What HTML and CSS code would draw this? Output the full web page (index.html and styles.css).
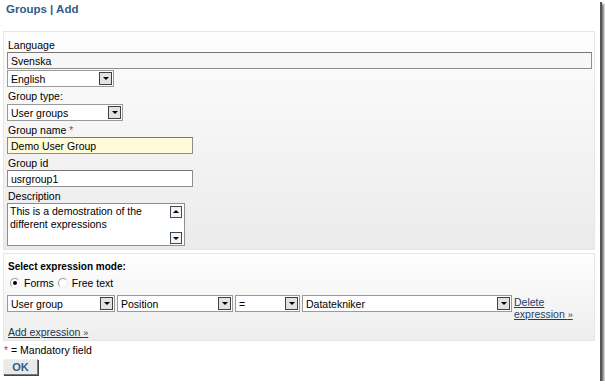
FILE: index.html
```html
<!DOCTYPE html>
<html lang="en">
  <head>
    <meta charset="UTF-8" />
    <title>Groups | Add</title>
    <link rel="stylesheet" href="styles.css">
  </head>
  <body>
    <div class="window">
      <h1>Groups | Add</h1>

      <div class="panel main-panel">
        <label class="field-label">Language</label>
        <input type="text" class="text-input wide" value="Svenska">
        <div class="select lang-select"><span class="select-text">English</span><span class="arrow"></span></div>

        <label class="field-label">Group type:</label>
        <div class="select type-select"><span class="select-text">User groups</span><span class="arrow"></span></div>

        <label class="field-label">Group name <span class="req">*</span></label>
        <input type="text" class="text-input medium mandatory" value="Demo User Group">

        <label class="field-label">Group id</label>
        <input type="text" class="text-input medium" value="usrgroup1">

        <label class="field-label">Description</label>
        <div class="textarea">
          <div class="textarea-text">This is a demostration of the different expressions</div>
          <div class="scrollbar">
            <span class="scroll-btn"><span class="tri up"></span></span>
            <span class="scroll-btn"><span class="tri"></span></span>
          </div>
        </div>
      </div>

      <div class="panel expr-panel">
        <div class="expr-title">Select expression mode:</div>
        <div class="mode-row">
          <label><span class="radio checked"></span>Forms</label>
          <label><span class="radio"></span>Free text</label>
        </div>
        <div class="expr-row">
          <div class="select s-field"><span class="select-text">User group</span><span class="arrow"></span></div>
          <div class="select s-prop"><span class="select-text">Position</span><span class="arrow"></span></div>
          <div class="select s-op"><span class="select-text">=</span><span class="arrow"></span></div>
          <div class="select s-value"><span class="select-text">Datatekniker</span><span class="arrow"></span></div>
          <a href="#" class="delete-link">Delete<br>expression <span class="raquo">»</span></a>
        </div>
        <a href="#" class="add-link">Add expression <span class="raquo">»</span></a>
      </div>

      <div class="mandatory-note"><span class="req">*</span> = Mandatory field</div>
      <button class="ok-button">OK</button>
    </div>
  </body>
</html>
```

FILE: styles.css
```css
body {
  margin: 0;
  background: #fff;
  font-family: "Liberation Sans", Arial, sans-serif;
  font-size: 10.5px;
  color: #000;
}
.window {
  width: 600px;
  height: 381px;
  background: #fff;
  box-shadow: 2px 2px 0 #555, 4px 4px 2px #777;
  overflow: hidden;
}
h1 {
  margin: 0;
  padding: 3px 6px 0;
  height: 28px;
  font-size: 11.5px;
  font-weight: bold;
  color: #2f5b8b;
}
.panel {
  box-sizing: border-box;
  margin: 0 5px 0 3px;
  border: 1px solid #e6e6e6;
  padding: 4px 3px 4px;
}
.main-panel {
  height: 219px;
  background: linear-gradient(#fdfdfd, #ebebeb);
}
.expr-panel {
  margin-top: 3px;
  height: 88px;
  padding-top: 6px;
  background: linear-gradient(#fefefe, #eeeeee);
}
.field-label {
  display: block;
  height: 14px;
  line-height: 14px;
  margin-top: 2px;
  padding-left: 1px;
}
.req {
  color: #e0302a;
}
.text-input {
  display: block;
  box-sizing: border-box;
  height: 17px;
  margin: 0;
  padding: 0 3px;
  border: 1px solid #8e8e8e;
  border-top-color: #777;
  font-family: inherit;
  font-size: 10.5px;
  background: #fff;
}
.wide {
  width: 585px;
  background: #f7f7f7;
}
.medium {
  width: 186px;
}
.mandatory {
  background: #fffbd9;
}
.select {
  display: flex;
  align-items: center;
  box-sizing: border-box;
  height: 17px;
  border: 1px solid #9a9a9a;
  background: #fff;
  padding-left: 3px;
}
.select-text {
  flex: 1;
  white-space: nowrap;
}
.arrow {
  position: relative;
  box-sizing: border-box;
  width: 13px;
  height: 13px;
  margin-right: 1px;
  border: 1px solid #404040;
  background: #e2e2e2;
}
.arrow::after {
  content: "";
  position: absolute;
  left: 3px;
  top: 4px;
  border-left: 3px solid transparent;
  border-right: 3px solid transparent;
  border-top: 3px solid #000;
}
.lang-select {
  width: 107px;
  margin-top: 1px;
}
.type-select {
  width: 116px;
  margin-top: 1px;
}
.textarea {
  display: flex;
  box-sizing: border-box;
  width: 178px;
  height: 43px;
  margin-top: 0;
  border: 1px solid #8e8e8e;
  background: #fff;
}
.textarea-text {
  flex: 1;
  padding: 1px 2px;
  line-height: 13px;
}
.scrollbar {
  display: flex;
  flex-direction: column;
  justify-content: space-between;
  padding: 2px 2px 1px;
}
.scroll-btn {
  position: relative;
  box-sizing: border-box;
  width: 12px;
  height: 12px;
  border: 1px solid #3a4a5a;
  background: #f4f4f4;
}
.tri {
  position: absolute;
  left: 2px;
  top: 4px;
  border-left: 3px solid transparent;
  border-right: 3px solid transparent;
  border-top: 3px solid #000;
}
.tri.up {
  top: 3px;
  border-top: none;
  border-bottom: 3px solid #000;
}
.expr-title {
  font-weight: bold;
  font-size: 10px;
  line-height: 14px;
  padding-left: 1px;
}
.mode-row {
  display: flex;
  gap: 4px;
  height: 16px;
  align-items: center;
  padding-left: 3px;
  margin-top: 1px;
}
.mode-row label {
  display: flex;
  align-items: center;
}
.radio {
  position: relative;
  width: 8px;
  height: 8px;
  margin-right: 4px;
  border-radius: 50%;
  border: 1px solid #999;
  border-right-color: #eee;
  border-bottom-color: #eee;
  background: #fff;
}
.radio.checked::after {
  content: "";
  position: absolute;
  left: 2px;
  top: 2px;
  width: 4px;
  height: 4px;
  border-radius: 50%;
  background: #000;
}
.expr-row {
  display: flex;
  align-items: flex-start;
  gap: 2px;
  margin-top: 4px;
}
.s-field { width: 108px; }
.s-prop { width: 116px; }
.s-op { width: 65px; }
.s-value { width: 210px; }
.delete-link,
.add-link {
  color: #1f3d63;
  line-height: 12px;
}
.delete-link {
  margin-top: 1px;
}
.add-link {
  display: inline-block;
  margin-top: 5px;
  padding-left: 1px;
  color: #23354d;
}
.raquo {
  font-size: 9px;
}
.mandatory-note {
  margin-top: 2px;
  padding-left: 4px;
  line-height: 14px;
}
.ok-button {
  display: block;
  margin: 2px 0 0 3px;
  width: 35px;
  height: 16px;
  padding: 0;
  border: 1px solid #777;
  border-top-color: #f0f0f0;
  border-left-color: #f0f0f0;
  box-shadow: 1px 1px 0 #444;
  background: #eaeaea;
  font-family: inherit;
  font-size: 11px;
  font-weight: bold;
  color: #2f5b8b;
}
```
